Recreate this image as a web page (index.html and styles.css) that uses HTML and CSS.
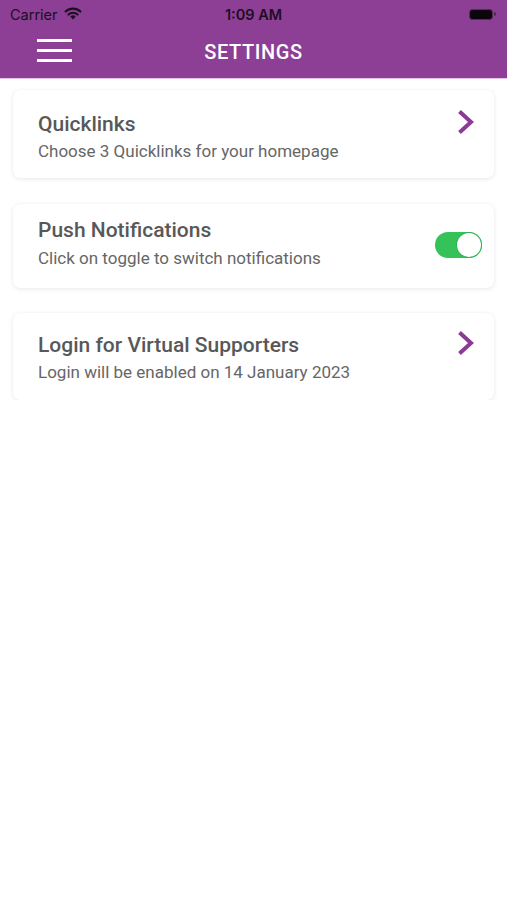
FILE: index.html
```html
<!DOCTYPE html>
<html>
<head>
<meta charset="utf-8">
<link rel="stylesheet" href="styles.css">
</head>
<body>
<header class="topbar">
  <div class="status">
    <div class="status-left">
      <span class="carrier">Carrier</span>
      <svg class="wifi" width="18" height="13" viewBox="0 0 18 13">
        <path d="M9 12.5 L6.3 9.6 A3.8 3.8 0 0 1 11.7 9.6 Z" fill="#1c0f1f"/>
        <path d="M4.4 7.6 A6.6 6.6 0 0 1 13.6 7.6" fill="none" stroke="#1c0f1f" stroke-width="2.1" stroke-linecap="round"/>
        <path d="M1.6 4.6 A10.6 10.6 0 0 1 16.4 4.6" fill="none" stroke="#1c0f1f" stroke-width="2.1" stroke-linecap="round"/>
      </svg>
    </div>
    <span class="time">1:09 AM</span>
    <div class="battery"><span class="battery-body"></span><span class="battery-nub"></span></div>
  </div>
  <nav class="navbar">
    <div class="menu">
      <span></span><span></span><span></span>
    </div>
    <h1 class="title">SETTINGS</h1>
  </nav>
</header>

<main class="list">
  <section class="card card-1">
    <div class="card-text">
      <h2 class="card-title">Quicklinks</h2>
      <p class="card-sub">Choose 3 Quicklinks for your homepage</p>
    </div>
    <svg class="chevron" width="20" height="26" viewBox="0 0 20 26">
      <path d="M3.5 2.5 L15 13 L3.5 23.5" fill="none" stroke="#8b3a95" stroke-width="4" stroke-linejoin="miter"/>
    </svg>
  </section>

  <section class="card card-2">
    <div class="card-text">
      <h2 class="card-title">Push Notifications</h2>
      <p class="card-sub">Click on toggle to switch notifications</p>
    </div>
    <div class="toggle"><span class="knob"></span></div>
  </section>

  <section class="card card-3">
    <div class="card-text">
      <h2 class="card-title">Login for Virtual Supporters</h2>
      <p class="card-sub">Login will be enabled on 14 January 2023</p>
    </div>
    <svg class="chevron" width="20" height="26" viewBox="0 0 20 26">
      <path d="M3.5 2.5 L15 13 L3.5 23.5" fill="none" stroke="#8b3a95" stroke-width="4" stroke-linejoin="miter"/>
    </svg>
  </section>
</main>
</body>
</html>
```

FILE: styles.css
```css
* { box-sizing: border-box; }
html, body { margin: 0; padding: 0; }
body {
  background: #ffffff;
  font-family: Roboto, "Noto Sans", "Liberation Sans", sans-serif;
  width: 507px;
}

.topbar {
  background: #8d3e95;
  border-bottom: 1px solid #e7c5ea;
}

.status {
  height: 28px;
  display: grid;
  grid-template-columns: 1fr auto 1fr;
  align-items: center;
  padding: 0 10px 0 10px;
}
.status-left {
  display: flex;
  align-items: center;
  gap: 6px;
}
.carrier {
  font-family: Inter, "Liberation Sans", sans-serif;
  font-size: 14.5px;
  color: #1c0f1f;
}
.wifi { margin-top: -2px; }
.time {
  font-family: Inter, "Liberation Sans", sans-serif;
  font-size: 14.5px;
  font-weight: 600;
  color: #1c0f1f;
}
.battery {
  justify-self: end;
  display: flex;
  align-items: center;
  gap: 1px;
  margin-right: 1px;
}
.battery-body {
  width: 24px;
  height: 11px;
  border-radius: 3.5px;
  background: #0b060c;
  border: 1px solid #5a2a60;
}
.battery-nub {
  width: 2px;
  height: 4px;
  border-radius: 0 2px 2px 0;
  background: #4c2550;
}

.navbar {
  height: 50px;
  display: flex;
  align-items: center;
  justify-content: center;
  position: relative;
}
.menu {
  position: absolute;
  left: 37px;
  top: 11px;
  display: flex;
  flex-direction: column;
  gap: 7px;
}
.menu span {
  display: block;
  width: 35px;
  height: 3px;
  background: #ffffff;
}
.title {
  margin: 0 0 2px 0;
  font-size: 20px;
  font-weight: 500;
  color: #ffffff;
  letter-spacing: 0.6px;
}

.list {
  padding: 11px 13px 0 13px;
  display: flex;
  flex-direction: column;
  gap: 25px;
}

.card {
  background: #ffffff;
  border-radius: 7px;
  box-shadow: 0 1px 5px rgba(0, 0, 0, 0.09), 0 0 1px rgba(0, 0, 0, 0.05);
  display: flex;
  align-items: flex-start;
  justify-content: space-between;
  padding-left: 25px;
  padding-right: 18px;
}
.card-1 { height: 88px; padding-top: 22px; }
.card-2 { height: 84px; padding-top: 14px; margin-top: 1px; align-items: center; padding-right: 12px; }
.card-3 { height: 87px; padding-top: 20px; }

.card-2 .card-text { align-self: flex-start; }

.card-title {
  margin: 0;
  font-size: 21px;
  line-height: 24px;
  font-weight: 500;
  color: #585858;
}
.card-sub {
  margin: 5px 0 0 0;
  font-size: 17px;
  line-height: 20px;
  color: #666666;
}
.card-2 .card-sub { margin-top: 6px; }

.chevron {
  margin-top: -3px;
  flex: none;
}

.toggle {
  width: 47px;
  height: 26px;
  border-radius: 13px;
  background: #35c259;
  position: relative;
  flex: none;
  margin-top: -16px;
}
.knob {
  position: absolute;
  right: 1px;
  top: 1px;
  width: 24px;
  height: 24px;
  border-radius: 50%;
  background: #ffffff;
  box-shadow: 0 0 0 1px #2fb552;
}
```
